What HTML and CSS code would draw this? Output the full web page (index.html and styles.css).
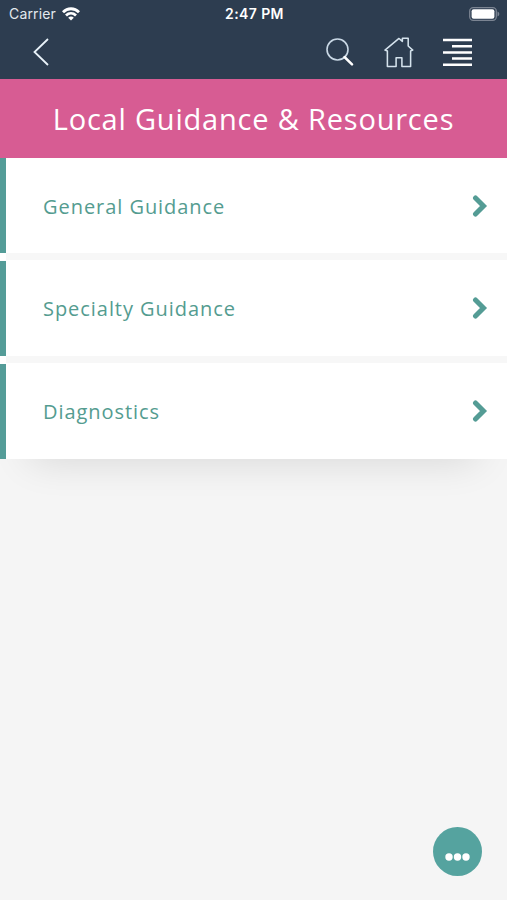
FILE: index.html
```
<!DOCTYPE html>
<html lang="en">
    <head>
        <meta charset="utf-8">
        <title>Local Guidance &amp; Resources</title>
        <link rel="stylesheet" href="styles.css">
    </head>
    <body>
        <header>
            <div class="status">
                <div class="carrier">
                    Carrier
                    <svg width="18" height="14" viewBox="0 0 18 14" fill="none" stroke="#fff" stroke-width="2.8">
                        <path d="M1 5.2C5.5.6 12.5.6 17 5.2"/>
                        <path d="M4 8.5c2.9-2.8 7.1-2.8 10 0"/>
                        <path d="M9 13.5L6.2 10.7c1.6-1.5 4-1.5 5.6 0z" fill="#fff" stroke="none"/>
                    </svg>
                </div>
                <div class="time">2:47 PM</div>
                <svg class="battery" width="31" height="14" viewBox="0 0 31 14">
                    <rect x=".7" y=".7" width="26.6" height="12.6" rx="3.5" fill="none" stroke="#7b8492" stroke-width="1.3"/>
                    <rect x="2.6" y="2.3" width="22.8" height="9.4" rx="2" fill="#fff"/>
                    <path d="M28.5 4.5c2.4 1 2.4 4 0 5z" fill="#7b8492"/>
                </svg>
            </div>
            <nav>
                <svg class="back" width="16" height="28" viewBox="0 0 16 28" fill="none" stroke="#e9f3fa" stroke-width="1.8">
                    <path d="M15 1L1.5 14 15 27"/>
                </svg>
                <svg class="search" width="28" height="28" viewBox="0 0 28 28" fill="none">
                    <circle cx="11.5" cy="11.5" r="10.5" stroke="#c9d8e5" stroke-width="1.6"/>
                    <path d="M18.5 19L26 26.3" stroke="#fff" stroke-width="2.5" stroke-linecap="round"/>
                </svg>
                <svg class="home" width="30" height="31" viewBox="0 0 31 32" fill="none" stroke="#d5e3ed" stroke-width="1.6" stroke-linejoin="round">
                    <path d="M3.5 14.5L1 13.5 15.5 1.5 19 4.5V1.3H25V9.3L29.7 13.5 27.5 14.5V30.5H18.5V21.5H12.5V30.5H3.5Z"/>
                </svg>
                <svg class="menu" width="29" height="29" viewBox="0 0 29 29" stroke="#fff" stroke-width="2.5">
                    <path d="M0 2h29M9 8.2h20M0 14.4h29M9 20.6h20M0 26.8h29"/>
                </svg>
            </nav>
        </header>

        <h1>Local Guidance &amp; Resources</h1>

        <div class="list">
            <a class="row">
                <span>General Guidance</span>
                <svg width="16" height="22" viewBox="0 0 16 22"><path d="M3.5 3L11.5 11 3.5 19"/></svg>
            </a>
            <a class="row">
                <span>Specialty Guidance</span>
                <svg width="16" height="22" viewBox="0 0 16 22"><path d="M3.5 3L11.5 11 3.5 19"/></svg>
            </a>
            <a class="row">
                <span>Diagnostics</span>
                <svg width="16" height="22" viewBox="0 0 16 22"><path d="M3.5 3L11.5 11 3.5 19"/></svg>
            </a>
        </div>

        <div class="more">
            <svg width="25" height="8" viewBox="0 0 25 8" fill="#fff">
                <circle cx="4" cy="4" r="3.7"/>
                <circle cx="12.5" cy="4" r="3.7"/>
                <circle cx="21" cy="4" r="3.7"/>
            </svg>
        </div>
    </body>
</html>
```
FILE: styles.css
```
body {
    margin: 0;
    height: 900px;
    overflow: hidden;
    background: #f5f5f5;
    font-family: "Open Sans", "Noto Sans", sans-serif;
}

svg {
    display: block;
    flex: none;
}

header {
    height: 79px;
    background: #2d3d50;
}

.status {
    display: grid;
    grid-template-columns: 1fr auto 1fr;
    align-items: center;
    height: 27px;
    padding: 0 7px 0 9px;
    color: #fff;
    font-family: Inter, sans-serif;
    font-size: 14px;
}

.carrier {
    display: flex;
    align-items: center;
    gap: 6px;
    color: #e3e9ee;
    letter-spacing: 0.15px;
}

.time {
    font-weight: 600;
    letter-spacing: 0.4px;
}

.battery {
    justify-self: end;
}

nav {
    display: flex;
    align-items: center;
    height: 50px;
    padding: 0 35px 0 33px;
}

.search {
    margin-left: auto;
}

.home {
    margin-left: 30px;
}

.menu {
    margin-left: 29px;
}

h1 {
    margin: 0;
    height: 79px;
    line-height: 79px;
    background: #d75c93;
    color: #fff;
    text-align: center;
    font-size: 29px;
    font-weight: 400;
    letter-spacing: 0.8px;
}

.list {
    display: flex;
    flex-direction: column;
    gap: 7.5px;
    background: #fff;
}

.row {
    display: flex;
    align-items: center;
    justify-content: space-between;
    box-sizing: border-box;
    position: relative;
    height: 95.3px;
    padding: 0 19px 0 37px;
    border-left: 6px solid #549c98;
    background: #fff;
    color: #549c90;
    font-size: 20px;
    letter-spacing: 0.95px;
}

.row span {
    padding-top: 1px;
}

/* light strip showing between two rows */
.row:not(:last-child) {
    box-shadow: 6px 7px 0 #f7f7f7;
}

.row:last-child {
    box-shadow: 0 30px 40px -30px rgba(0, 0, 0, 0.14);
}

.row path {
    fill: none;
    stroke: #549c95;
    stroke-width: 5;
    stroke-linecap: round;
}

.more {
    position: fixed;
    right: 25px;
    bottom: 24px;
    display: flex;
    align-items: center;
    justify-content: center;
    box-sizing: border-box;
    width: 49px;
    height: 49px;
    padding-top: 11px;
    border-radius: 50%;
    background: #55a39f;
}
```
